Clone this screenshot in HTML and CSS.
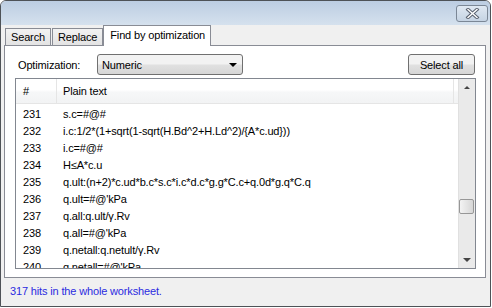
FILE: index.html
```html
<!DOCTYPE html>
<html lang="en">
<head>
    <meta charset="UTF-8">
    <title>Find by optimization</title>
    <link rel="stylesheet" href="styles.css">
</head>
<body>
    <div class="window">
        <div class="title-bar">
            <button class="close-btn" aria-label="Close">
                <svg width="19" height="11" viewBox="0 0 19 11">
                    <path d="M5 1.5 L14 9.5 M14 1.5 L5 9.5" stroke="#5a6270" stroke-width="3.4" stroke-linecap="square"/>
                    <path d="M5 1.5 L14 9.5 M14 1.5 L5 9.5" stroke="#ffffff" stroke-width="1.4" stroke-linecap="square"/>
                </svg>
            </button>
        </div>

        <div class="tabs">
            <div class="tab">Search</div>
            <div class="tab">Replace</div>
            <div class="tab active">Find by optimization</div>
        </div>

        <div class="panel">
            <div class="controls">
                <span class="label">Optimization:</span>
                <div class="dropdown">
                    <span>Numeric</span>
                    <span class="arrow"></span>
                </div>
                <button class="btn">Select all</button>
            </div>

            <div class="list">
                <div class="list-main">
                    <div class="list-header">
                        <div class="col-num">#</div>
                        <div class="col-text">Plain text</div>
                        <div class="col-rest"></div>
                    </div>
                    <div class="rows">
                        <div class="row"><span class="num">231</span><span class="txt">s.c=#@#</span></div>
                        <div class="row"><span class="num">232</span><span class="txt">i.c:1/2*(1+sqrt(1-sqrt(H.Bd^2+H.Ld^2)/{A*c.ud}))</span></div>
                        <div class="row"><span class="num">233</span><span class="txt">i.c=#@#</span></div>
                        <div class="row"><span class="num">234</span><span class="txt">H≤A*c.u</span></div>
                        <div class="row"><span class="num">235</span><span class="txt">q.ult:(n+2)*c.ud*b.c*s.c*i.c*d.c*g.g*C.c+q.0d*g.q*C.q</span></div>
                        <div class="row"><span class="num">236</span><span class="txt">q.ult=#@'kPa</span></div>
                        <div class="row"><span class="num">237</span><span class="txt">q.all:q.ult/γ.Rv</span></div>
                        <div class="row"><span class="num">238</span><span class="txt">q.all=#@'kPa</span></div>
                        <div class="row"><span class="num">239</span><span class="txt">q.netall:q.netult/γ.Rv</span></div>
                        <div class="row"><span class="num">240</span><span class="txt">q.netall=#@'kPa</span></div>
                    </div>
                </div>
                <div class="scrollbar">
                    <div class="sb-arrow up"></div>
                    <div class="sb-track">
                        <div class="sb-thumb"></div>
                    </div>
                    <div class="sb-arrow down"></div>
                </div>
            </div>
        </div>

        <div class="status">317 hits in the whole worksheet.</div>
    </div>
</body>
</html>
```

FILE: styles.css
```css
* {
    box-sizing: border-box;
}
body {
    margin: 0;
    background-color: #ffffff;
    font-family: "Liberation Sans", Arial, sans-serif;
    font-size: 11px;
    letter-spacing: -0.15px;
    color: #000;
}
.window {
    width: 491px;
    height: 307px;
    border: 1px solid #4e5257;
    border-radius: 6px 6px 0 0;
    background-color: #f0f0f0;
    display: flex;
    flex-direction: column;
    overflow: hidden;
}
.title-bar {
    height: 24px;
    flex: none;
    background: linear-gradient(#bccde2, #d5e1ee);
    display: flex;
    justify-content: flex-end;
    align-items: flex-start;
    padding: 4px 2px 0 0;
}
.close-btn {
    width: 32px;
    height: 17px;
    padding: 0;
    border: 1px solid #7b8796;
    border-radius: 3px;
    background: linear-gradient(#dfe8f2, #c5d3e3);
    display: flex;
    align-items: center;
    justify-content: center;
}

/* tabs */
.tabs {
    height: 20px;
    flex: none;
    display: flex;
    align-items: flex-end;
    padding-left: 4px;
    position: relative;
    z-index: 1;
}
.tab {
    height: 17px;
    padding: 0 5px;
    margin-right: 1px;
    border: 1px solid #898c95;
    border-bottom: none;
    background: linear-gradient(#f2f2f2, #e3e3e3);
    line-height: 16px;
    white-space: nowrap;
}
.tab.active {
    height: 21px;
    margin-bottom: -1px;
    margin-left: -1px;
    padding: 0 5px 0 6px;
    background: #ffffff;
    line-height: 18px;
}

/* panel */
.panel {
    height: 233px;
    flex: none;
    margin: 0 4px 0 3px;
    border: 1px solid #898c95;
    background-color: #ffffff;
    padding: 8px 9px 8px 10px;
    display: flex;
    flex-direction: column;
}
.controls {
    height: 21px;
    display: flex;
    align-items: center;
    margin-bottom: 3px;
}
.label {
    width: 82px;
    padding-left: 3px;
}
.dropdown {
    width: 146px;
    height: 21px;
    border: 1px solid #707070;
    border-radius: 3px;
    background: linear-gradient(#f2f2f2 45%, #e0e0e0 55%, #d6d6d6);
    display: flex;
    align-items: center;
    justify-content: space-between;
    padding: 0 5px 0 4px;
}
.arrow {
    width: 0;
    height: 0;
    border-left: 4px solid transparent;
    border-right: 4px solid transparent;
    border-top: 4px solid #000;
}
.btn {
    margin-left: auto;
    margin-right: 1px;
    width: 67px;
    height: 21px;
    padding: 0;
    border: 1px solid #707070;
    border-radius: 3px;
    background: linear-gradient(#f2f2f2 45%, #e0e0e0 55%, #d6d6d6);
    font-family: inherit;
    font-size: 11px;
    letter-spacing: -0.15px;
    color: #000;
}

/* list */
.list {
    flex: 1;
    border: 1px solid #828790;
    display: flex;
    overflow: hidden;
}
.list-main {
    flex: 1;
    display: flex;
    flex-direction: column;
    overflow: hidden;
}
.list-header {
    height: 25px;
    flex: none;
    display: flex;
    background: linear-gradient(#ffffff 45%, #f6f7f8 55%, #f2f3f4);
    border-bottom: 1px solid #e5e5e5;
}
.list-header > div {
    line-height: 24px;
    border-right: 1px solid #e5e5e5;
}
.col-num {
    width: 41px;
    padding-left: 7px;
}
.col-text {
    width: 397px;
    padding-left: 6px;
}
.col-rest {
    flex: 1;
    border-right: none !important;
}
.rows {
    padding-top: 2px;
}
.row {
    height: 17px;
    line-height: 17px;
    display: flex;
    white-space: nowrap;
}
.num {
    width: 47px;
    padding-left: 7px;
    flex: none;
}

/* scrollbar */
.scrollbar {
    width: 17px;
    flex: none;
    display: flex;
    flex-direction: column;
    background: #eaeaea;
    border-left: 1px solid #e0e0e0;
}
.sb-arrow {
    height: 17px;
    flex: none;
    display: flex;
    align-items: center;
    justify-content: center;
}
.sb-arrow.up::after {
    content: "";
    border-left: 3px solid transparent;
    border-right: 3px solid transparent;
    border-bottom: 3px solid #444;
}
.sb-arrow.down::after {
    content: "";
    border-left: 4px solid transparent;
    border-right: 4px solid transparent;
    border-top: 4px solid #444;
}
.sb-track {
    flex: 1;
    padding-top: 103px;
}
.sb-thumb {
    width: 15px;
    height: 15px;
    border: 1px solid #979797;
    border-radius: 2px;
    background: linear-gradient(90deg, #f3f3f3, #e2e2e2 60%, #d6d6d6);
}

/* status */
.status {
    flex: 1;
    padding: 7px 9px;
    color: #2b2be0;
}
```
